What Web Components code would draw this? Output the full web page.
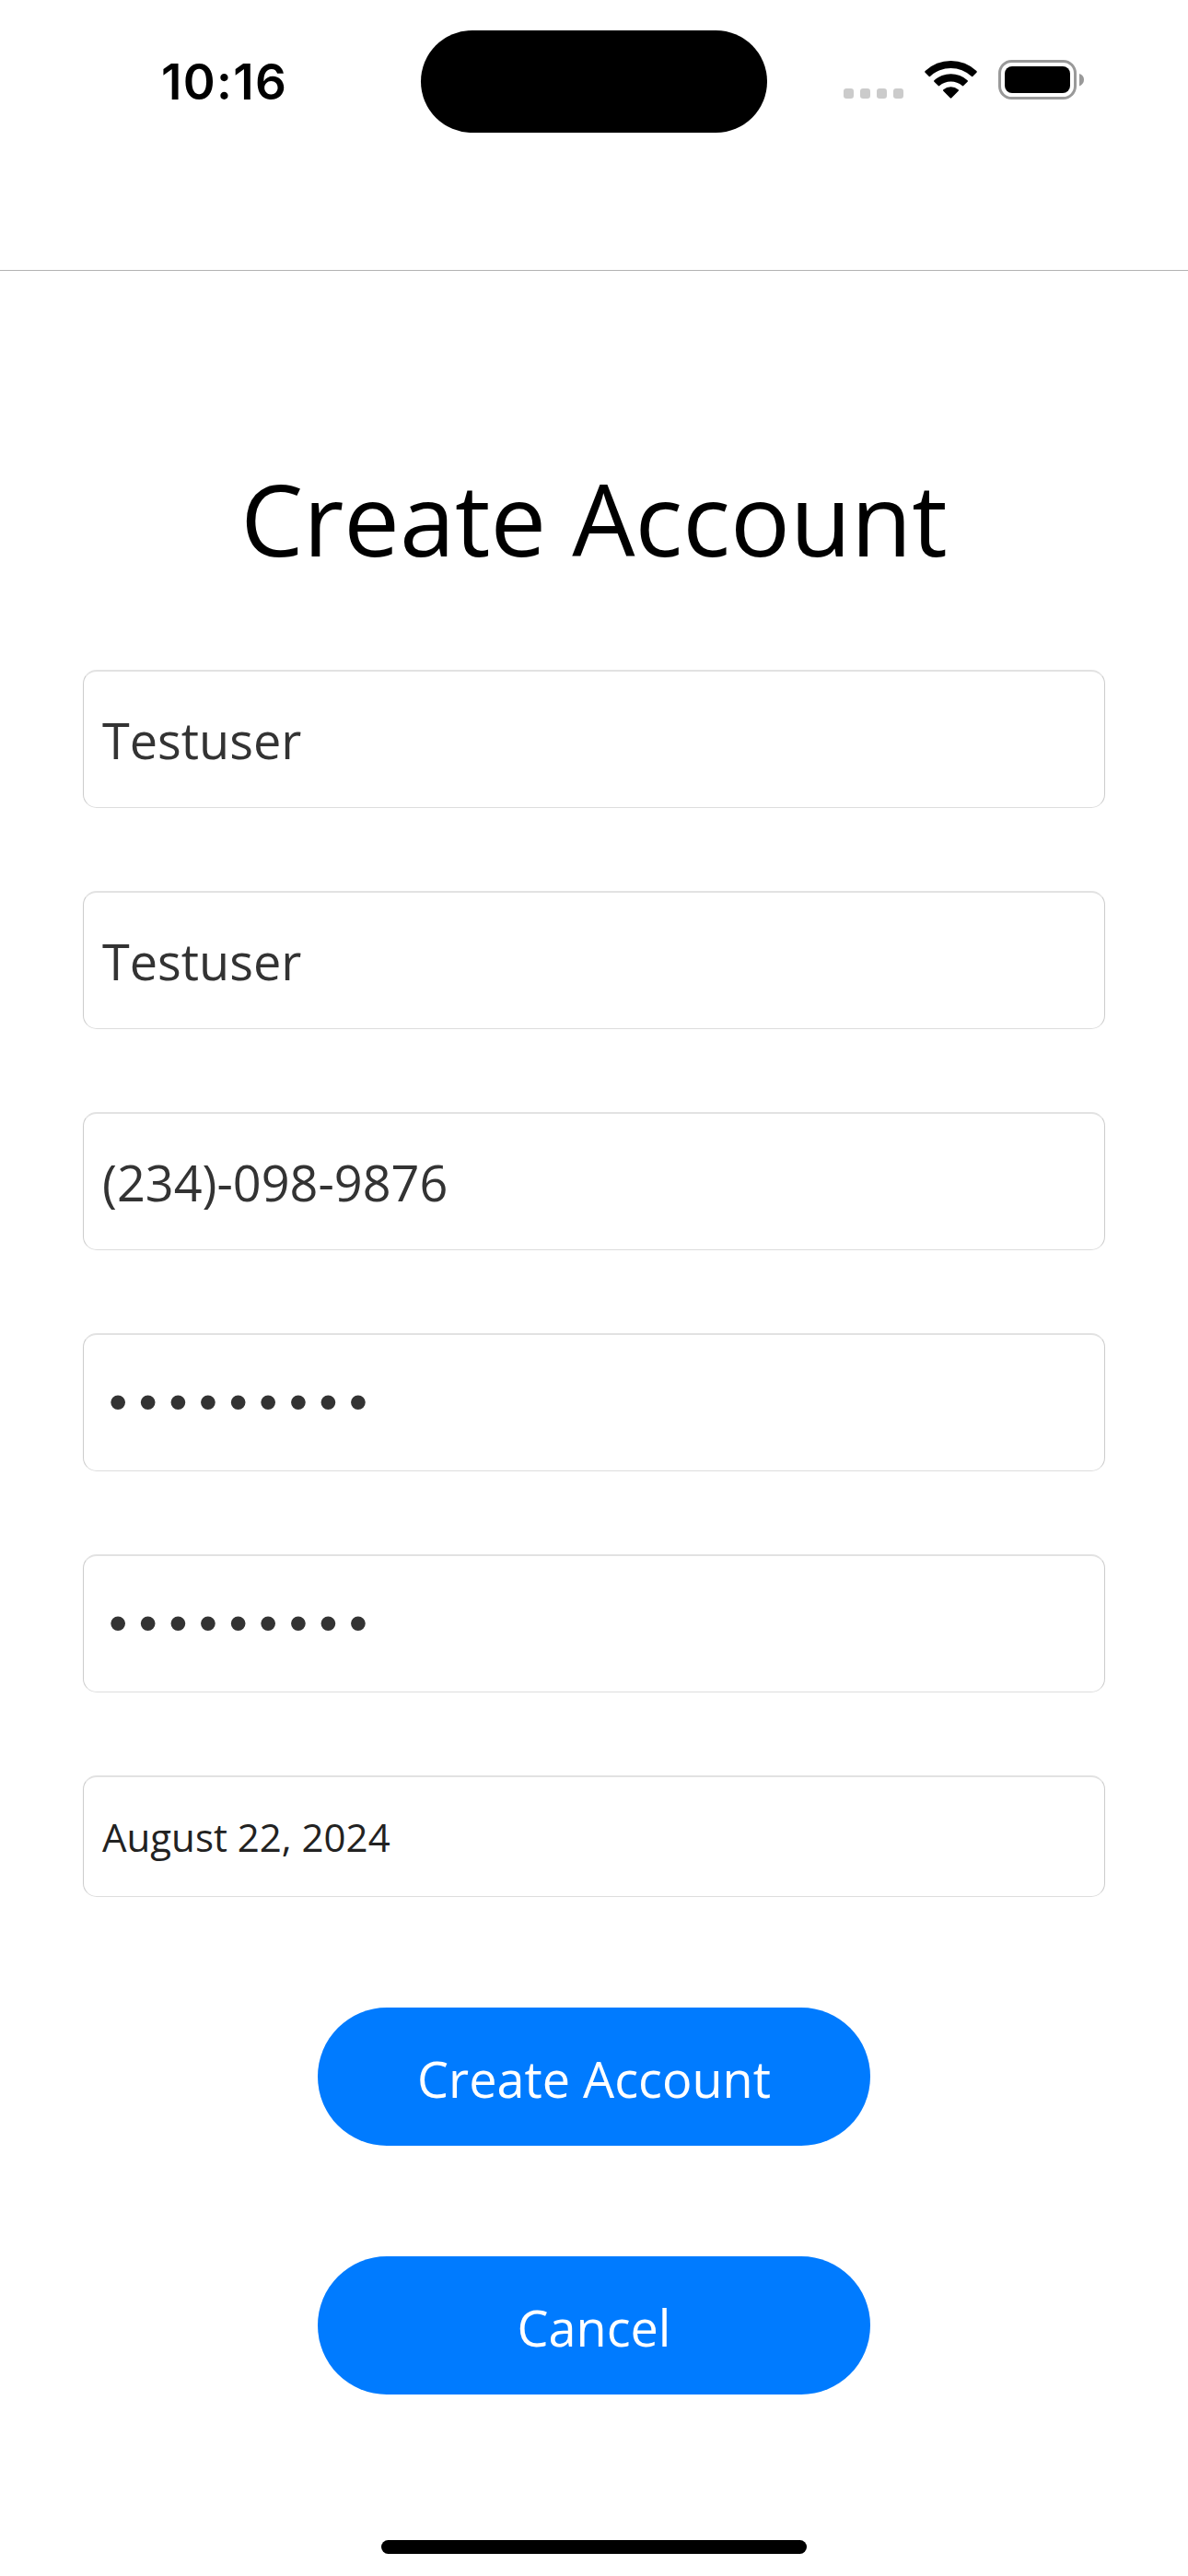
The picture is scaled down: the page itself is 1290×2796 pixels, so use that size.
<!DOCTYPE html>
<html lang="en">
<head>
<meta charset="utf-8">
<title>Create Account</title>
<style>
html,body{margin:0;padding:0;background:#fff}
body{width:1290px;height:2796px;overflow:hidden;font-family:"Open Sans","Noto Sans",sans-serif}
</style>
</head>
<body>
<app-screen>
  <status-bar slot="status" time="10:16"></status-bar>
  <page-title>Create Account</page-title>
  <form-fields>
    <text-field>Testuser</text-field>
    <text-field>Testuser</text-field>
    <text-field>(234)-098-9876</text-field>
    <text-field secure>•••••••••</text-field>
    <text-field secure>•••••••••</text-field>
    <text-field compact>August 22, 2024</text-field>
  </form-fields>
  <button-stack>
    <pill-button>Create Account</pill-button>
    <pill-button>Cancel</pill-button>
  </button-stack>
  <home-indicator slot="home"></home-indicator>
</app-screen>
<script>
const define = (name, html) => {
  const template = document.createElement('template');
  template.innerHTML = html;
  customElements.define(name, class extends HTMLElement {
    constructor() {
      super();
      this.attachShadow({ mode: 'open' }).append(template.content.cloneNode(true));
    }
    connectedCallback() {
      const time = this.shadowRoot.querySelector('.time');
      if (time) time.textContent = this.getAttribute('time');
    }
  });
};

define('app-screen', `
<style>
:host{display:flex;flex-direction:column;width:1290px;height:2796px;background:#fff}
header{box-sizing:border-box;height:294px;flex:none;border-bottom:1px solid #b3b3b3}
main{flex:1;display:flex;flex-direction:column;align-items:center;padding-top:195px}
footer{flex:none;display:flex;justify-content:center;padding-bottom:24px}
</style>
<header><slot name="status"></slot></header>
<main><slot></slot></main>
<footer><slot name="home"></slot></footer>`);

define('status-bar', `
<style>
:host{display:grid;grid-template-columns:457px 376px 457px;padding-top:33px;align-items:center;height:111px}
.time{font:600 53px/64px Inter,sans-serif;color:#000;padding-left:175px;letter-spacing:1.3px}
.island{height:111px;border-radius:56px;background:#000}
.icons{display:flex;padding-left:83px;padding-bottom:3px}
svg{display:block}
</style>
<span class="time"></span>
<div class="island"></div>
<div class="icons">
<svg width="262" height="46" viewBox="0 0 262 46">
  <g fill="#cbcbcb"><rect y="32" width="11" height="11" rx="3.2"/><rect x="18" y="32" width="11" height="11" rx="3.2"/><rect x="36" y="32" width="11" height="11" rx="3.2"/><rect x="54" y="32" width="11" height="11" rx="3.2"/></g>
  <g transform="translate(88 1)">
    <path d="M.6 12.1A40.4 40.4 0 0 1 56.4 12.1Q57.2 12.900 56.4 13.700L52.2 17.900Q51.600 18.500 50.800 17.800A32.400 32.400 0 0 0 6.200 17.800Q5.400 18.500 4.800 17.900L.6 13.700Q-.2 12.900 .6 12.100Z"/>
    <path d="M10.400 22.200A26.700 26.700 0 0 1 46.600 22.200Q47.400 23 46.600 23.700L42.200 28.100Q41.500 28.700 40.800 28.100A18.600 18.600 0 0 0 16.200 28.100Q15.500 28.700 14.800 28.100L10.400 23.700Q9.600 23 10.400 22.200Z"/>
    <path d="M20.400 32.200A12.800 12.800 0 0 1 36.600 32.200Q37.500 33 36.700 33.800L29.300 41.300Q28.500 42.100 27.700 41.300L20.300 33.800Q19.500 33 20.400 32.200Z"/>
  </g>
  <rect x="169.500" y="2.500" width="82" height="40" rx="13" fill="none" stroke="#999" stroke-width="3"/>
  <rect x="175" y="8" width="71" height="29" rx="8"/>
  <path d="M256 16Q261 17.800 261 22.500Q261 27.200 256 29.400Z" fill="#999"/>
</svg>
</div>`);

define('page-title', `
<style>
:host{display:block}
h1{margin:0;font-weight:400;font-size:108px;line-height:148px;color:#000;white-space:nowrap}
</style>
<h1><slot></slot></h1>`);

define('form-fields', `
<style>:host{display:flex;flex-direction:column;gap:90px;width:1110px;margin-top:90px}</style>
<slot></slot>`);

define('text-field', `
<style>
:host{box-sizing:border-box;display:flex;align-items:center;height:150px;padding:0 20px;border:1px solid #ccc;border-top:2px solid #e2e2e2;border-bottom-color:#ddd;border-radius:15px;font-size:54px;line-height:74px;color:#333;white-space:pre}
:host([compact]){height:132px;font-size:42px;line-height:58px;color:#222}
:host([secure]) span{font-family:"Liberation Sans",sans-serif;font-size:58px;letter-spacing:12.300px;padding:0 0 4px 7px}
</style>
<span><slot></slot></span>`);

define('button-stack', `
<style>:host{display:flex;flex-direction:column;gap:120px;margin-top:120px}</style>
<slot></slot>`);

define('pill-button', `
<style>
:host{display:block}
button{box-sizing:border-box;display:flex;align-items:center;justify-content:center;width:600px;height:150px;padding:3px 0 0;border:0;border-radius:75px;background:#007bff;color:#fff;font:400 54px/74px "Open Sans","Noto Sans",sans-serif}
</style>
<button><slot></slot></button>`);

define('home-indicator', `
<style>:host{display:block;width:462px;height:15px;border-radius:8px;background:#000}</style>`);
</script>
</body>
</html>
